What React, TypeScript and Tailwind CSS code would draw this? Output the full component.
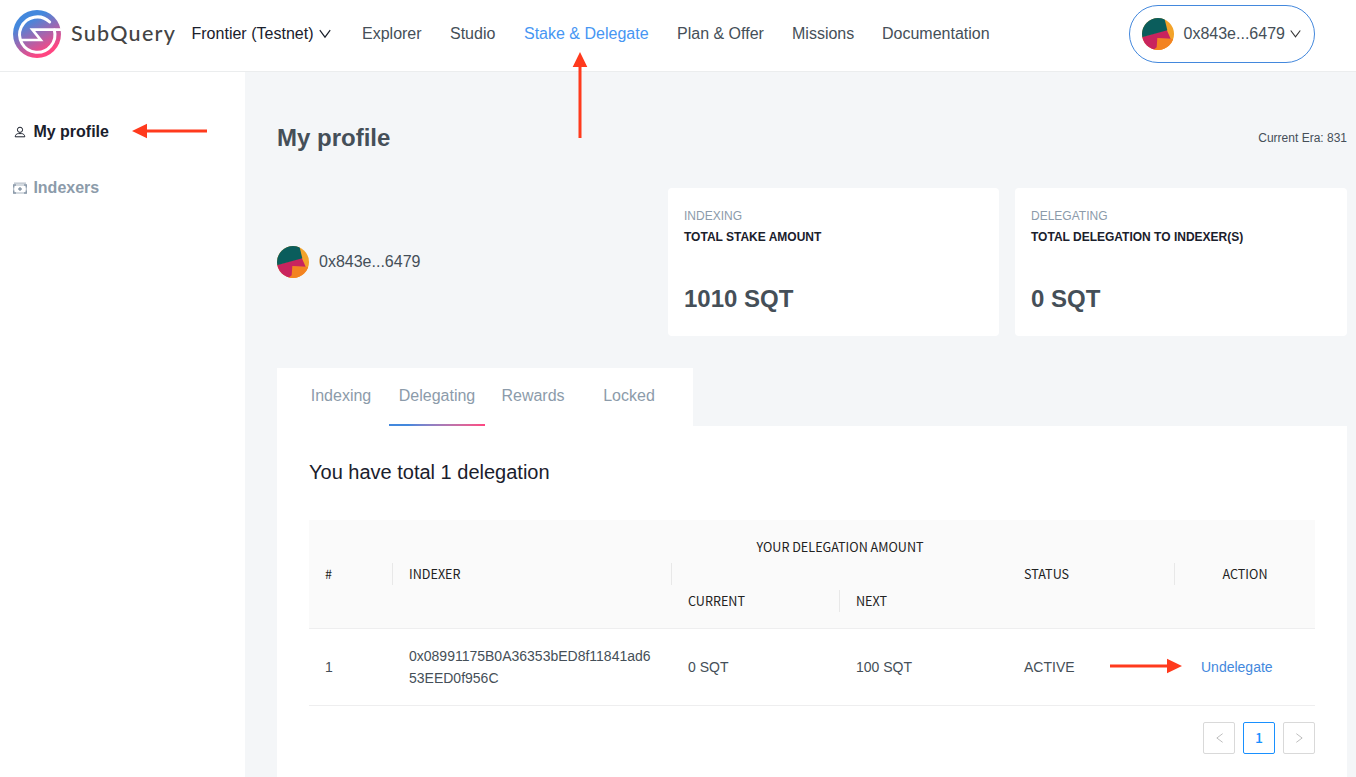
import type { ReactNode } from 'react';

function Logo() {
  return (
    <svg className="h-12 w-12 shrink-0" viewBox="0 0 144 144" fill="none">
      <defs>
        <linearGradient id="brand" x1="45" y1="20" x2="100" y2="125" gradientUnits="userSpaceOnUse">
          <stop offset="0.1" stopColor="#4388dd" />
          <stop offset="1" stopColor="#ff4581" />
        </linearGradient>
      </defs>
      <circle cx="72" cy="72" r="72" fill="url(#brand)" />
      <path d="M110 36A53 53 0 1 0 124 60" stroke="#fff" strokeWidth="9" strokeLinecap="round" />
      <path d="M24 90H83L58 59H144" stroke="#fff" strokeWidth="8" strokeLinejoin="miter" />
    </svg>
  );
}

function Avatar() {
  return (
    <span className="block h-8 w-8 shrink-0 overflow-hidden rounded-full">
      <svg className="block h-8 w-8" viewBox="0 0 96 96">
        <rect width="96" height="96" fill="#f3a329" />
        <path d="M45 60L96 63V96H36Z" fill="#f38321" />
        <path d="M0 57L74 35L86 62L46 60L44 88L34 96H0Z" fill="#c9245e" />
        <path d="M0 0H67L76 37L0 58Z" fill="#0a5d5c" />
      </svg>
    </span>
  );
}

function Chevron({ className }: { className: string }) {
  return (
    <svg className={className} viewBox="0 0 12 12" fill="none" stroke="currentColor" strokeWidth="1.2">
      <path d="M0.8 2.2L6 9.2L11.2 2.2" />
    </svg>
  );
}

function Arrow({ className, length }: { className: string; length: number }) {
  const neck = length - 15;
  return (
    <svg className={className} viewBox={`0 0 ${length} 16`}>
      <path d={`M0 6.5H${neck}V0.7L${length} 8L${neck} 15.3V9.5H0Z`} fill="#ff3a1d" />
    </svg>
  );
}

function UserIcon() {
  return (
    <svg className="h-3 w-3" viewBox="0 0 12 12" fill="none" stroke="#1a202c" strokeWidth="1">
      <circle cx="6" cy="3.8" r="2.6" />
      <path d="M1.2 10.8C1.4 8.5 3 7.6 4.4 7.6H7.6C9 7.6 10.6 8.5 10.8 10.8Z" />
    </svg>
  );
}

function CashIcon() {
  return (
    <svg className="h-3 w-3.5" viewBox="0 0 14 12" fill="none">
      <path d="M1 1.2H13" stroke="#c5ccd4" strokeWidth="1.6" />
      <path d="M0.7 3H13.3V11H0.7Z" stroke="#a9b5c0" strokeWidth="1" />
      <path d="M0.7 5.5V3H3M11 3H13.3V5.5M0.7 8.5V11H3M11 11H13.3V8.5" stroke="#8c9baa" strokeWidth="1.4" />
      <path d="M7 5.3V8.7M5.3 7H8.7" stroke="#8c9baa" strokeWidth="1.8" />
    </svg>
  );
}

function Header() {
  return (
    <header className="flex h-[72px] shrink-0 items-start border-b border-[#ebedee] bg-white text-base leading-6 text-[#454f58]">
      <div className="flex w-[191.5px] items-center gap-[10px] pt-[10px] pl-[13px]">
        <Logo />
        <span className="font-[Lato,sans-serif] text-[21.5px] leading-none font-medium tracking-[1.25px] text-[#444]">SubQuery</span>
      </div>
      <div className="flex w-[170.5px] items-center gap-[5px] pt-[22px] text-[#1a202c]">
        <span className="tracking-[0.01px]">Frontier (Testnet)</span>
        <Chevron className="h-3.5 w-3" />
      </div>
      <nav className="flex gap-7 pt-[22px]">
        <a className="w-[60px] whitespace-nowrap">Explorer</a>
        <a className="w-[46px] whitespace-nowrap">Studio</a>
        <a className="w-[125px] whitespace-nowrap text-[#4796f3]">Stake &amp; Delegate</a>
        <a className="w-[87px] whitespace-nowrap">Plan &amp; Offer</a>
        <a className="w-[62px] whitespace-nowrap">Missions</a>
        <a className="whitespace-nowrap">Documentation</a>
      </nav>
      <div className="mt-[5px] mr-[41px] ml-auto flex h-[58px] w-[186px] items-center rounded-full border border-[#4388dd] pl-3">
        <Avatar />
        <span className="ml-[9.5px]">0x843e...6479</span>
        <Chevron className="ml-[5px] h-3 w-[11px] text-[#333]" />
      </div>
    </header>
  );
}

function Card({ kind, title, value }: { kind: string; title: string; value: string }) {
  return (
    <section className="flex h-[148px] flex-col rounded bg-white px-4 pt-[18px]">
      <p className="text-xs leading-5 text-[#8c9baa]">{kind}</p>
      <h2 className="mt-px text-xs leading-5 font-bold text-[#1a202c]">{title}</h2>
      <p className="mt-9 text-2xl leading-8 font-bold text-[#454f58]">{value}</p>
    </section>
  );
}

function Th({ children, className = '' }: { children: ReactNode; className?: string }) {
  return (
    <div className={`flex items-center ${className}`}>
      {children}
    </div>
  );
}

function Divider() {
  return <i className="ml-auto h-[22px] w-px bg-[#e8e8e8]" />;
}

function DelegationTable() {
  return (
    <div className="mt-[34px]">
      <div className="grid h-[109px] grid-cols-[84px_279px_168px_168px_167px_140px] grid-rows-[54px_54px] border-b border-[#eeeeef] bg-[#fafafa] font-['Noto_Sans_CJK_SC',sans-serif] text-[12.6px] text-[#222]">
        <Th className="row-span-2 pl-4">#<Divider /></Th>
        <Th className="row-span-2 pl-4">INDEXER<Divider /></Th>
        <Th className="col-span-2 justify-center">YOUR DELEGATION AMOUNT</Th>
        <Th className="row-span-2 pl-4">STATUS<Divider /></Th>
        <Th className="row-span-2 justify-center">ACTION</Th>
        <Th className="pl-4">CURRENT<Divider /></Th>
        <Th className="pl-4">NEXT</Th>
      </div>
      <div className="grid h-[77px] grid-cols-[84px_279px_168px_168px_167px_140px] items-center border-b border-[#eeeeef] text-sm leading-[22px] text-[#454f58]">
        <span className="pl-4">1</span>
        <span className="px-4 break-all">0x08991175B0A36353bED8f11841ad653EED0f956C</span>
        <span className="pl-4">0 SQT</span>
        <span className="pl-4">100 SQT</span>
        <span className="pl-4">ACTIVE</span>
        <a className="pl-[26px] text-[#4388dd]">Undelegate</a>
      </div>
      <div className="mt-4 flex justify-end gap-2">
        <button className="flex h-8 w-8 items-center justify-center rounded-xs border border-[#d9d9d9] text-[#bfbfbf]">
          <Chevron className="h-[10px] w-[11px] rotate-90" />
        </button>
        <button className="flex h-8 w-8 items-center justify-center rounded-xs border border-[#1890ff] pb-[2px] font-['Noto_Sans_CJK_SC',sans-serif] text-sm leading-none font-medium text-[#1890ff]">1</button>
        <button className="flex h-8 w-8 items-center justify-center rounded-xs border border-[#d9d9d9] text-[#bfbfbf]">
          <Chevron className="h-[10px] w-[11px] -rotate-90" />
        </button>
      </div>
    </div>
  );
}

export default function App() {
  return (
    <div className="relative flex h-[777px] w-[1356px] flex-col overflow-hidden bg-[#f4f6f8] font-['Liberation_Sans',Arial,sans-serif]">
      <Header />
      <div className="flex min-h-0 flex-1">
        <aside className="flex w-[245px] shrink-0 flex-col gap-8 bg-white pt-12 pl-[13px] text-base leading-6 font-bold">
          <a className="flex items-center text-[#1a202c]">
            <span className="mr-[6.4px] flex w-3.5 justify-center"><UserIcon /></span>My profile
          </a>
          <a className="flex items-center text-[#8c9baa]">
            <span className="mr-[6.4px] flex w-3.5 justify-center"><CashIcon /></span>Indexers
          </a>
        </aside>
        <main className="flex min-w-0 flex-1 flex-col pr-[9px] pl-8">
          <div className="flex items-center justify-between pt-[50px] text-[#454f58]">
            <h1 className="text-2xl leading-8 font-bold">My profile</h1>
            <span className="text-xs">Current Era: 831</span>
          </div>
          <div className="mt-[34px] grid grid-cols-[375px_331px_332px] gap-4">
            <div className="flex items-center text-base text-[#454f58]">
              <Avatar />
              <span className="ml-[10px]">0x843e...6479</span>
            </div>
            <Card kind="INDEXING" title="TOTAL STAKE AMOUNT" value="1010 SQT" />
            <Card kind="DELEGATING" title="TOTAL DELEGATION TO INDEXER(S)" value="0 SQT" />
          </div>
          <div className="mt-8 flex h-[58px] w-[416px] shrink-0 bg-white px-4 text-center text-base text-[#8c9baa]">
            <a className="w-24 pt-4">Indexing</a>
            <a className="flex w-24 flex-col pt-4">
              Delegating
              <i className="mt-auto h-0.5 bg-linear-to-r from-[#4388dd] from-20% to-[#ff4581]" />
            </a>
            <a className="w-24 pt-4">Rewards</a>
            <a className="w-24 pt-4">Locked</a>
          </div>
          <section className="flex-1 bg-white px-8 pt-8">
            <h2 className="text-xl leading-7 text-[#1a202c]">You have total 1 delegation</h2>
            <DelegationTable />
          </section>
        </main>
      </div>
      <Arrow length={75} className="absolute top-[123px] left-[132px] h-4 w-[75px] rotate-180" />
      <Arrow length={86} className="absolute top-[87px] left-[537px] h-4 w-[86px] -rotate-90" />
      <Arrow length={72} className="absolute top-[658px] left-[1110px] h-4 w-[72px]" />
    </div>
  );
}
